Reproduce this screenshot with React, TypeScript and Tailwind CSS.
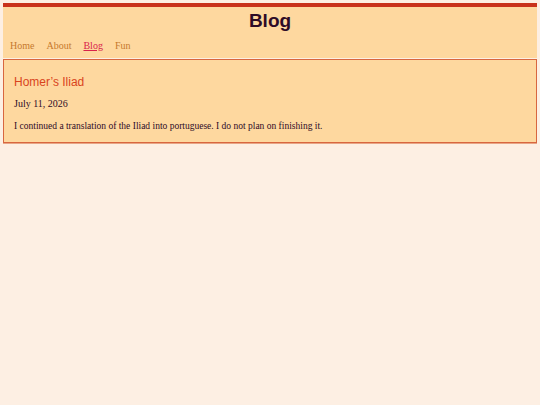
export default function App() {
  const links = ["Home", "About", "Blog", "Fun"];

  return (
    <div className="min-h-screen bg-[#fdefe3] p-[3px] font-['Liberation_Serif',serif]">
      <header className="border-t-4 border-[#c9321b] bg-[#fed89f]">
        <h1 className="pt-[3px] text-center font-['Liberation_Sans',Arial,sans-serif] text-[19px] font-bold leading-[22px] text-[#2e0b27]">
          Blog
        </h1>
        <nav className="flex gap-[12px] px-[7px] pt-[8px] pb-[6px] text-[10px] leading-[12px]">
          {links.map((l) => (
            <a
              key={l}
              href="#"
              className={
                l === "Blog"
                  ? "text-[#d8234b] underline"
                  : "text-[#c6782d]"
              }
            >
              {l}
            </a>
          ))}
        </nav>
      </header>

      <article className="mt-[1px] border border-[#d8663f] bg-[#fed89f] px-[10px] pt-[15px] pb-[10px] shadow-[0_1px_0_#e8a585]">
        <h2 className="font-['Liberation_Sans',Arial,sans-serif] text-[12px] leading-[14px] text-[#d9441d]">
          Homer’s Iliad
        </h2>
        <p className="mt-[9px] text-[10px] font-medium leading-[12px] text-[#2e0b27]">
          July 11, 2026
        </p>
        <p className="mt-[10px] text-[9.5px] leading-[12px] text-[#2e0b27]">
          I continued a translation of the Iliad into portuguese. I do not plan on finishing it.
        </p>
      </article>
    </div>
  );
}
